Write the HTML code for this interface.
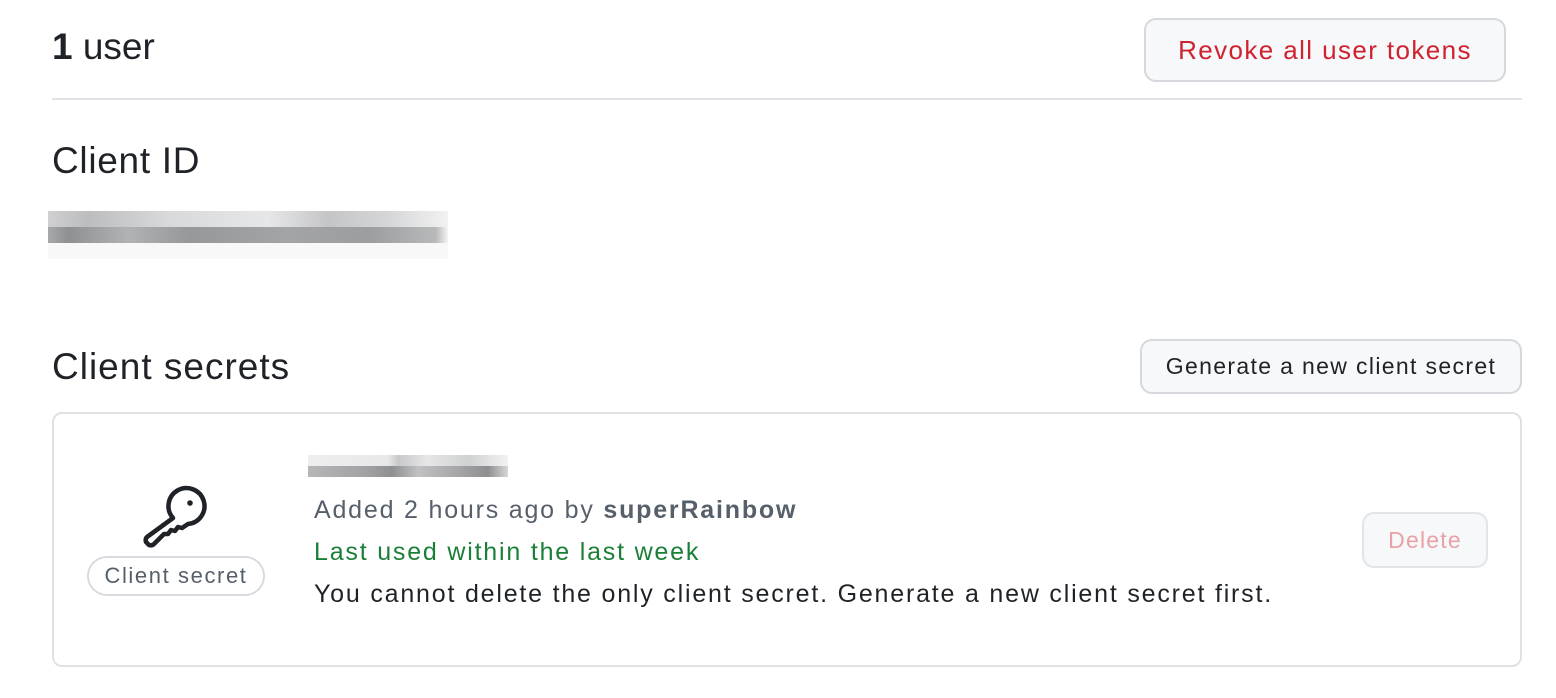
<!DOCTYPE html>
<html><head><style>
body{margin:0;width:1556px;height:698px;background:#fff;font-family:"Liberation Sans",sans-serif;color:#1f2328;position:relative;overflow:hidden}
.a{position:absolute}
.btn{position:absolute;border:2px solid #d5d8dc;border-radius:12px;background:#f6f8fa;font-size:25px;display:flex;align-items:center;justify-content:center;box-sizing:border-box}
.t{letter-spacing:1.8px}
</style></head><body>
<div class="a" style="left:52px;top:26px;font-size:37px"><b>1</b> user</div>
<div class="btn" style="left:1144px;top:18px;width:362px;height:64px;color:#cf222e;font-size:26px;letter-spacing:1.4px">Revoke all user tokens</div>
<div class="a" style="left:52px;top:98px;width:1470px;height:2px;background:#e1e4e8"></div>
<div class="a" style="left:52px;top:140px;font-size:37px;letter-spacing:0.7px">Client ID</div>
<div class="a" style="left:48px;top:211px;width:400px;height:16px;background:linear-gradient(90deg,#cfd0d2,#bcbdbf 10%,#d8d9da 30%,#e6e7e8 55%,#c4c5c7 70%,#d5d6d8 85%,#f2f2f2)"></div>
<div class="a" style="left:48px;top:227px;width:400px;height:16px;background:linear-gradient(90deg,#a8a9ab,#8f9092 5%,#b1b2b4 20%,#97989a 35%,#a3a4a6 60%,#9c9d9f 80%,#b8b9bb 97%,#f4f4f4)"></div>
<div class="a" style="left:48px;top:243px;width:400px;height:16px;background:#f8f8f8"></div>
<div class="a" style="left:52px;top:346px;font-size:37px;letter-spacing:1px">Client secrets</div>
<div class="btn" style="left:1140px;top:339px;width:382px;height:55px;color:#1f2328;font-size:23px;letter-spacing:1.35px">Generate a new client secret</div>
<div class="a" style="left:52px;top:412px;width:1470px;height:255px;border:2px solid #dfe2e5;border-radius:10px;box-sizing:border-box"></div>
<div class="a" style="left:308px;top:455px;width:200px;height:11px;background:linear-gradient(90deg,#eee,#e8e8e8 40%,#c8c9cb 45%,#e6e6e6 60%,#d0d1d2 80%,#f2f2f2)"></div>
<div class="a" style="left:308px;top:466px;width:200px;height:11px;background:linear-gradient(90deg,#b5b6b8,#a0a1a3 30%,#8e8f91 42%,#c0c1c2 55%,#a5a6a8 75%,#8d8e90 90%,#d8d8d8)"></div>
<svg class="a" style="left:142px;top:484px" width="68" height="66" viewBox="0 0 68 66" fill="none" stroke="#1f2328" stroke-width="4.5" stroke-linejoin="round" stroke-linecap="round">
<path d="M31 34 A18 18 0 1 1 46 40 L40 44 L36 43 L33 47 L29 46 L26 50 L22 50 L12 60 Q10 62 7 61 L4 58 Q3 55 5 53 Z"/>
<circle cx="48" cy="19" r="2.8" fill="#1f2328" stroke="none"/>
</svg>
<div class="a" style="left:87px;top:556px;width:178px;height:40px;border:2px solid #d8dbdf;border-radius:20px;box-sizing:border-box;font-size:22px;color:#57606a;display:flex;align-items:center;justify-content:center;letter-spacing:1.6px">Client secret</div>
<div class="a t" style="left:314px;top:496px;font-size:25px;color:#57606a">Added 2 hours ago by <b>superRainbow</b></div>
<div class="a t" style="left:314px;top:538px;font-size:25px;color:#1a7f37">Last used within the last week</div>
<div class="a t" style="left:314px;top:580px;font-size:25px;color:#1f2328">You cannot delete the only client secret. Generate a new client secret first.</div>
<div class="btn" style="left:1362px;top:512px;width:126px;height:56px;color:#e9a1a6;background:#f6f8fa;border-color:#e1e4e8;font-size:23px;letter-spacing:1.2px">Delete</div>
</body></html>
